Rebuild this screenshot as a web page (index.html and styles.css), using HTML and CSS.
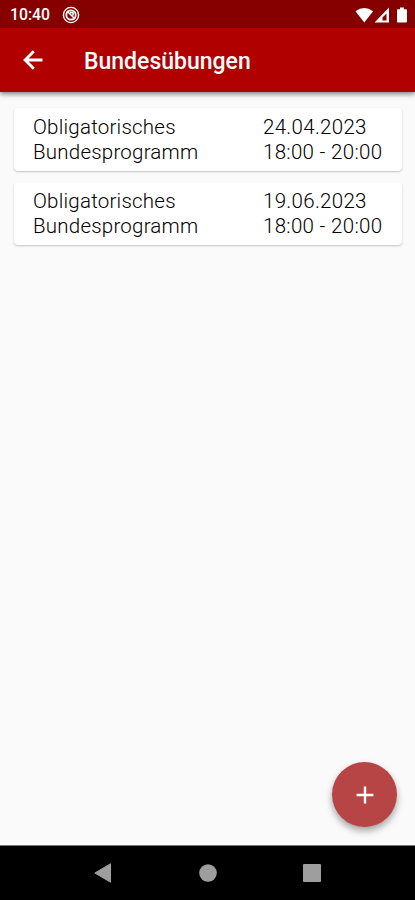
FILE: index.html
```html
<!DOCTYPE html>
<html lang="de">
<head>
	<meta charset="UTF-8">
	<meta name="viewport" content="width=device-width">
	<title>Bundesübungen</title>
	<link rel="stylesheet" href="styles.css">
</head>
<body>
	<div class="status">
		<span class="clock">10:40</span>
		<svg class="notify" width="18" height="18" viewBox="0 0 18 18">
			<circle cx="9" cy="9" r="7.6" fill="none" stroke="#fff" stroke-width="1.4"/>
			<circle cx="9" cy="9" r="4.7" fill="none" stroke="#fff" stroke-width="1.8"/>
			<path d="M5 5l8 8M8 6.5h3v3" fill="none" stroke="#fff" stroke-width="1.5"/>
		</svg>
		<svg class="signals" width="53" height="18" viewBox="0 0 53 18">
			<path d="M1.500 5.200Q10.300-1.200 19.100 5.200L10.300 16.500z" fill="#fff"/>
			<path d="M35 1.500v15H20.500z" fill="#fff"/>
			<path d="M32.500 7.500v7h-4V11.500z" fill="#870000"/>
			<path d="M44 3.200h2V1.500h4v1.700h2q1 0 1 1v11.300q0 1-1 1h-8q-1 0-1-1V4.200q0-1 1-1z" fill="#fff"/>
		</svg>
	</div>
	<header class="appbar">
		<svg class="back" width="20" height="20" viewBox="0 0 20 20">
			<path d="M19.500 10H2M10.800 1.300L2.100 10l8.700 8.700" fill="none" stroke="#fff" stroke-width="2.800"/>
		</svg>
		<h1>Bundesübungen</h1>
	</header>
	<main class="list">
		<div class="card">
			<div class="name">Obligatorisches Bundesprogramm</div>
			<div class="date">24.04.2023<br>18:00 - 20:00</div>
		</div>
		<div class="card">
			<div class="name">Obligatorisches Bundesprogramm</div>
			<div class="date">19.06.2023<br>18:00 - 20:00</div>
		</div>
		<button class="fab" aria-label="Hinzufügen">
			<svg width="18" height="18" viewBox="0 0 18 18">
				<path d="M9 .6v16.800M.6 9h16.800" stroke="#fff" stroke-width="2.400"/>
			</svg>
		</button>
	</main>
	<nav class="navbar">
		<svg width="18" height="20" viewBox="0 0 18 20"><path d="M16.500.8v18.400L.8 10z" fill="#9e9e9e" stroke="#9e9e9e" stroke-linejoin="round"/></svg>
		<svg width="18" height="18" viewBox="0 0 18 18"><circle cx="9" cy="9" r="8.800" fill="#9e9e9e"/></svg>
		<svg width="18" height="18" viewBox="0 0 18 18"><rect width="18" height="18" rx="1" fill="#9e9e9e"/></svg>
	</nav>
</body>
</html>
```
FILE: styles.css
```css
* { box-sizing: border-box; }
body { margin: 0; height: 900px; display: flex; flex-direction: column; background: #fafafa; font-family: Roboto, sans-serif; }
.status { height: 28px; padding: 2px 8px 0 10px; display: flex; align-items: center; background: #870000; color: #fff; }
.clock { font-size: 15.800px; font-weight: 500; line-height: 26px; width: 52px; }
.signals { margin-left: auto; }
.appbar { height: 64px; padding: 0 23px; display: flex; align-items: center; background: #b00000; color: #fff; position: relative; box-shadow: 0 2px 5px rgba(0, 0, 0, .5); }
.appbar h1 { margin: 4px 0 0 41px; font-size: 23px; font-weight: 500; line-height: 28px; }
.list { flex: 1; padding: 16px 13px 0 14px; position: relative; }
.card { height: 63px; margin-bottom: 11px; padding: 7px 0 0 19px; display: flex; background: #fff; border-radius: 4px; box-shadow: 0 1px 2px rgba(0, 0, 0, .22); font-size: 20.500px; font-weight: 300; line-height: 24.500px; letter-spacing: .3px; color: #000; }
.name { width: 230px; padding-right: 40px; letter-spacing: .22px; }
.date { white-space: nowrap; }
.fab { position: absolute; right: 18px; bottom: 18px; width: 65px; height: 65px; padding: 0; display: flex; align-items: center; justify-content: center; border: none; border-radius: 50%; background: #b84545; box-shadow: 0 4px 7px rgba(0, 0, 0, .35); }
.navbar { height: 55px; padding: 0 94px; display: flex; align-items: center; justify-content: space-between; background: #000; border-top: 1px solid #777; }
```
